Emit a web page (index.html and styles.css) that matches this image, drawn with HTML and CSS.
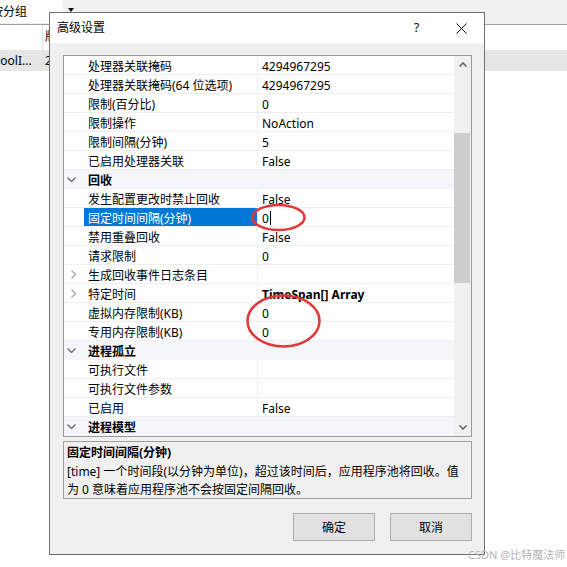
FILE: index.html
```html
<!DOCTYPE html>
<html lang="zh-CN">
<head>
    <meta charset="UTF-8">
    <meta name="viewport" content="width=device-width, initial-scale=1.0">
    <title>高级设置</title>
    <link rel="stylesheet" href="styles.css">
</head>
<body>

    <!-- application pool list behind the dialog -->
    <div class="toolbar">
        <div class="combo"><span class="combo-text">按分组</span></div>
        <div class="combo-drop">
            <svg width="6" height="4" viewBox="0 0 6 4"><polygon points="0,0 6,0 3,4" fill="#000"/></svg>
        </div>
    </div>
    <div class="list-head">
        <div class="col-name"></div>
        <div class="col-ver">版本</div>
    </div>
    <div class="list-row">
        <div class="col-name"><span class="cut">PoolI...</span></div>
        <div class="col-ver">2</div>
    </div>

    <div class="dialog">
        <div class="title-bar">
            <span class="title">高级设置</span>
            <span class="help">?</span>
            <svg class="close" width="11" height="11" viewBox="0 0 11 11">
                <line x1="0.5" y1="0.5" x2="10.5" y2="10.5" stroke="#000" stroke-width="1"/>
                <line x1="10.5" y1="0.5" x2="0.5" y2="10.5" stroke="#000" stroke-width="1"/>
            </svg>
        </div>

        <div class="dialog-body">
            <div class="grid">
                <div class="rows">
                    <div class="pg-row"><div class="pg-margin"></div><div class="pg-name">处理器关联掩码</div><div class="pg-value">4294967295</div></div>
                    <div class="pg-row"><div class="pg-margin"></div><div class="pg-name">处理器关联掩码(64 位选项)</div><div class="pg-value">4294967295</div></div>
                    <div class="pg-row"><div class="pg-margin"></div><div class="pg-name">限制(百分比)</div><div class="pg-value">0</div></div>
                    <div class="pg-row"><div class="pg-margin"></div><div class="pg-name">限制操作</div><div class="pg-value">NoAction</div></div>
                    <div class="pg-row"><div class="pg-margin"></div><div class="pg-name">限制间隔(分钟)</div><div class="pg-value">5</div></div>
                    <div class="pg-row"><div class="pg-margin"></div><div class="pg-name">已启用处理器关联</div><div class="pg-value">False</div></div>

                    <div class="pg-row cat">
                        <div class="pg-margin open"><svg width="9" height="5" viewBox="0 0 9 5"><polyline points="0.5,0.5 4.5,4.5 8.5,0.5" fill="none" stroke="#666" stroke-width="1.2"/></svg></div>
                        <div class="pg-name">回收</div>
                    </div>
                    <div class="pg-row"><div class="pg-margin"></div><div class="pg-name">发生配置更改时禁止回收</div><div class="pg-value">False</div></div>
                    <div class="pg-row sel"><div class="pg-margin"></div><div class="pg-name">固定时间间隔(分钟)</div><div class="pg-value">0<span class="caret"></span></div></div>
                    <div class="pg-row"><div class="pg-margin"></div><div class="pg-name">禁用重叠回收</div><div class="pg-value">False</div></div>
                    <div class="pg-row"><div class="pg-margin"></div><div class="pg-name">请求限制</div><div class="pg-value">0</div></div>
                    <div class="pg-row">
                        <div class="pg-margin shut"><svg width="5" height="9" viewBox="0 0 5 9"><polyline points="0.5,0.5 4.5,4.5 0.5,8.5" fill="none" stroke="#a0a0a0" stroke-width="1.2"/></svg></div>
                        <div class="pg-name">生成回收事件日志条目</div><div class="pg-value"></div>
                    </div>
                    <div class="pg-row">
                        <div class="pg-margin shut"><svg width="5" height="9" viewBox="0 0 5 9"><polyline points="0.5,0.5 4.5,4.5 0.5,8.5" fill="none" stroke="#a0a0a0" stroke-width="1.2"/></svg></div>
                        <div class="pg-name">特定时间</div><div class="pg-value bold">TimeSpan[] Array</div>
                    </div>
                    <div class="pg-row"><div class="pg-margin"></div><div class="pg-name">虚拟内存限制(KB)</div><div class="pg-value">0</div></div>
                    <div class="pg-row"><div class="pg-margin"></div><div class="pg-name">专用内存限制(KB)</div><div class="pg-value">0</div></div>

                    <div class="pg-row cat">
                        <div class="pg-margin open"><svg width="9" height="5" viewBox="0 0 9 5"><polyline points="0.5,0.5 4.5,4.5 8.5,0.5" fill="none" stroke="#666" stroke-width="1.2"/></svg></div>
                        <div class="pg-name">进程孤立</div>
                    </div>
                    <div class="pg-row"><div class="pg-margin"></div><div class="pg-name">可执行文件</div><div class="pg-value"></div></div>
                    <div class="pg-row"><div class="pg-margin"></div><div class="pg-name">可执行文件参数</div><div class="pg-value"></div></div>
                    <div class="pg-row"><div class="pg-margin"></div><div class="pg-name">已启用</div><div class="pg-value">False</div></div>

                    <div class="pg-row cat">
                        <div class="pg-margin open"><svg width="9" height="5" viewBox="0 0 9 5"><polyline points="0.5,0.5 4.5,4.5 8.5,0.5" fill="none" stroke="#666" stroke-width="1.2"/></svg></div>
                        <div class="pg-name">进程模型</div>
                    </div>
                </div>

                <div class="vscroll">
                    <div class="sb-btn"><svg width="8" height="5" viewBox="0 0 8 5"><polyline points="0.5,4.5 4,1 7.5,4.5" fill="none" stroke="#606060" stroke-width="1.5"/></svg></div>
                    <div class="sb-track"><div class="sb-thumb"></div></div>
                    <div class="sb-btn"><svg width="8" height="5" viewBox="0 0 8 5"><polyline points="0.5,0.5 4,4 7.5,0.5" fill="none" stroke="#606060" stroke-width="1.5"/></svg></div>
                </div>
            </div>

            <div class="desc">
                <div class="desc-title">固定时间间隔(分钟)</div>
                <div class="desc-text">[time] 一个时间段(以分钟为单位)，超过该时间后，应用程序池将回收。值<br>为 0 意味着应用程序池不会按固定间隔回收。</div>
            </div>

            <div class="buttons">
                <button class="btn">确定</button>
                <button class="btn">取消</button>
            </div>
        </div>
    </div>

    <!-- hand-drawn marks over the values -->
    <svg class="marks" width="567" height="567" viewBox="0 0 567 567">
        <ellipse cx="278.5" cy="217.5" rx="26" ry="12.5" fill="none" stroke="#e0393a" stroke-width="2.6"/>
        <ellipse cx="283.5" cy="321" rx="36" ry="25.5" fill="none" stroke="#e0393a" stroke-width="2.6"/>
    </svg>

    <div class="watermark">CSDN @比特魔法师</div>

</body>
</html>
```

FILE: styles.css
```css
* {
    box-sizing: border-box;
}
html, body {
    margin: 0;
}
body {
    position: relative;
    width: 567px;
    height: 567px;
    overflow: hidden;
    background: #fff;
    font-family: "Noto Sans", "Noto Sans CJK SC", sans-serif;
    font-size: 12px;
    color: #000;
}

/* list window behind */
.toolbar {
    display: flex;
    height: 25px;
    background: #f0f0f0;
    border-bottom: 1px solid #a0a0a0;
}
.combo {
    width: 63px;
    height: 23px;
    background: #fff;
    overflow: hidden;
    white-space: nowrap;
    line-height: 23px;
}
.combo-text {
    margin-left: -9px;
}
.combo-drop {
    width: 14px;
    padding: 8px 0 0 5px;
}
.combo-drop svg {
    display: block;
}
.list-head, .list-row {
    display: flex;
    white-space: nowrap;
}
.list-head {
    height: 25px;
    line-height: 24px;
}
.list-row {
    height: 21px;
    line-height: 21px;
    background: #e5e5e5;
}
.col-name {
    width: 43px;
    overflow: hidden;
}
.list-head .col-name {
    border-right: 1px solid #e5e5e5;
}
.col-ver {
    padding-left: 2px;
}
.cut {
    margin-left: -7px;
}

/* dialog */
.dialog {
    position: absolute;
    left: 49px;
    top: 12px;
    width: 436px;
    height: 543px;
    border: 1px solid #707070;
    background: #f0f0f0;
}
.title-bar {
    display: flex;
    align-items: center;
    height: 30px;
    background: #fff;
    padding-left: 7px;
}
.title {
    flex: 1;
    line-height: 20px;
}
.help {
    width: 10px;
    font-size: 12px;
    line-height: 20px;
}
.close {
    display: block;
    margin: 0 17px 0 32px;
}
.dialog-body {
    padding: 12px 12px 0 13px;
}

/* property grid */
.grid {
    display: flex;
    width: 409px;
    height: 382px;
    border: 1px solid #9a9a9a;
    background: #fff;
}
.rows {
    width: 390px;
}
.pg-row {
    display: flex;
    height: 19px;
    border-bottom: 1px solid #efefef;
    white-space: nowrap;
}
.pg-margin {
    width: 20px;
    display: flex;
    align-items: center;
}
.pg-margin svg {
    display: block;
}
.pg-margin.open {
    padding-left: 3px;
}
.pg-margin.shut {
    padding-left: 7px;
}
.pg-name {
    width: 174px;
    padding: 2px 0 0 4px;
    line-height: 17px;
    border-right: 1px solid #efefef;
    overflow: hidden;
}
.pg-value {
    flex: 1;
    padding: 2px 0 0 4px;
    line-height: 17px;
    display: flex;
    align-items: center;
}
.pg-value.bold {
    font-weight: bold;
}
.pg-row.cat {
    background: #f4f6fa;
    border-bottom-color: #f4f6fa;
}
.pg-row.cat .pg-name {
    border-right: none;
    font-weight: bold;
}
.pg-row.sel .pg-name {
    background: #0078d7;
    color: #fff;
}
.caret {
    width: 1px;
    height: 14px;
    margin-left: 1px;
    background: #000;
}

.vscroll {
    width: 17px;
    display: flex;
    flex-direction: column;
    background: #f0f0f0;
}
.sb-btn {
    height: 17px;
    display: flex;
    align-items: center;
    justify-content: center;
}
.sb-btn svg {
    display: block;
}
.sb-track {
    flex: 1;
    padding: 60px 1px 0 0;
}
.sb-thumb {
    height: 150px;
    background: #cdcdcd;
}

/* description panel */
.desc {
    width: 409px;
    height: 58px;
    margin-top: 4px;
    padding: 2px 3px 0;
    border: 1px solid #a0a0a0;
    line-height: 18.5px;
    white-space: nowrap;
}
.desc-title {
    font-weight: bold;
}

.buttons {
    display: flex;
    justify-content: flex-end;
    gap: 15px;
    margin-top: 14px;
}
.btn {
    width: 82px;
    height: 28px;
    padding: 0;
    border: 1px solid #adadad;
    background: #e1e1e1;
    font-family: inherit;
    font-size: 12px;
    color: #000;
}

.marks {
    position: absolute;
    left: 0;
    top: 0;
    pointer-events: none;
}
.watermark {
    position: absolute;
    left: 468px;
    top: 547px;
    font-size: 11px;
    line-height: 16px;
    color: #b4b4b4;
    white-space: nowrap;
}
```
